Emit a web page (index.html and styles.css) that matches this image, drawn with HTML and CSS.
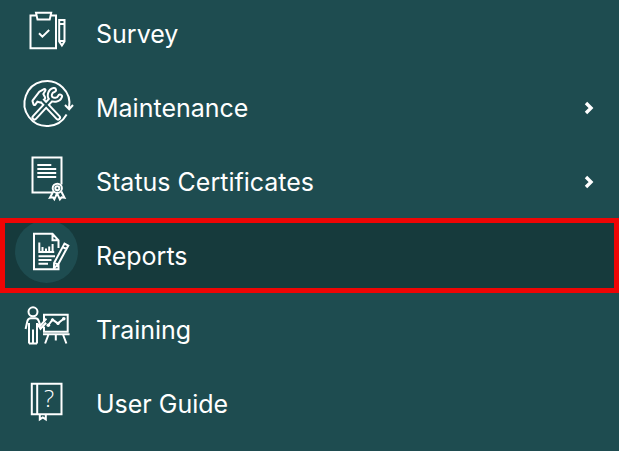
FILE: index.html
```html
<!DOCTYPE html>
<html lang="en">
<head>
<meta charset="utf-8">
<meta name="viewport" content="width=device-width, initial-scale=1">
<title>Menu</title>
<link rel="stylesheet" href="styles.css">
</head>
<body>
<nav aria-label="Main">
<ul class="menu">
  <li><a class="item" href="#survey">
    <svg class="icon" viewBox="0 0 64 64" aria-hidden="true">
      <path d="M21 17.5h-5.5v32.8h25.5V17.5H36M21 14.8h15.2l-1.5 6.8H22.5zM24 35.2l3.4 3.4 6.8-6.6M44.2 22h5.3v21.5l-2.6 4-2.7-4zM44.2 26h5.3M44.2 43h5.3"/>
    </svg>
    <span class="label">Survey</span>
  </a></li>
  <li><a class="item" href="#maintenance">
    <svg class="icon" viewBox="0 0 64 64" aria-hidden="true">
      <defs>
        <path id="handles" d="M27 28.5L43 45.5M36.5 27L19.5 45.5"/>
        <path id="jaw" d="M39 18C34.5 19 33.8 24.500 36 26.500C38 28.500 43.500 28.500 45 24.500"/>
        <path id="hammer" d="M18.500 29L25 20.500l4.500-2.500-2.300 4 2 4-3.700 3.500-3.500-1-2.500 3.500z"/>
      </defs>
      <path d="M54 36A22.5 22.5 0 1 0 51.600 42.500M50 33l4.200 4.200 3.800-4.200"/>
      <g class="tool-edge"><use href="#handles"/><use href="#jaw"/><use class="head" href="#hammer"/></g>
      <g class="tool-core"><use href="#handles"/><use href="#jaw"/><use class="head" href="#hammer"/></g>
    </svg>
    <span class="label">Maintenance</span>
    <svg class="chevron" viewBox="0 0 10 14" aria-hidden="true"><path d="M2 2l5 5-5 5"/></svg>
  </a></li>
  <li><a class="item" href="#certificates">
    <svg class="icon" viewBox="0 0 64 64" aria-hidden="true">
      <path d="M37 46.4H17.500V11.600h29v27M22.300 19h14M22.300 23h18.900M22.300 27h18.900M22.300 31h18.900"/>
      <circle cx="42.3" cy="42.3" r="4.6"/><circle cx="42.3" cy="42.3" r="2"/>
      <path d="M38.3 45.5l-3.400 6.200 3-.4 1.400 2 2.800-6 2.800 6 1.600-2 3 .4-3.200-6.200"/>
    </svg>
    <span class="label">Status Certificates</span>
    <svg class="chevron" viewBox="0 0 10 14" aria-hidden="true"><path d="M2 2l5 5-5 5"/></svg>
  </a></li>
  <li><a class="item current" href="#reports" aria-current="page">
    <svg class="icon" viewBox="0 0 64 64" aria-hidden="true">
      <circle class="disc" cx="31.5" cy="31.5" r="31.5"/>
      <path d="M43.5 28v-7.7l-6-6.5H19v35.400h24.500v-5M37.500 14v6.300h6M24.300 22.500V32h14.900M27.500 32v-5M31 32v-3.500M34.200 32v-5.500M37.600 32v-8M23.500 36.300H40M23.500 40h13M23.500 43.800H33M49.500 23.600l3.800 2-10.400 19.200-4 3.200.2-5zM47.600 27l3.800 2M39.200 42.600l3.800 2"/>
    </svg>
    <span class="label">Reports</span>
  </a></li>
  <li><a class="item" href="#training">
    <svg class="icon" viewBox="0 0 64 64" aria-hidden="true">
      <circle cx="18" cy="17.8" r="4.5"/>
      <path d="M14 49.400V29M18 49.400V35.500M22 49.400V29M14 49.400h8M10.600 35l1.800-8q.7-2.800 3.400-2.800h4.600q2.400 0 3.300 2.600l1.700 4.800 6-7M22.500 30l3 4.800 5.600-6M29 27v-6.200h23.700v17H29v-5M28 40.300h26.600M33.500 40.500l-3.400 9M40.800 40.500v6M48 40.500l3.400 9M33.500 31l4-5.400 5.400 3.800 5.800-4.600"/>
      <g class="dots"><circle cx="33.3" cy="31.3" r="1.8"/><circle cx="37.5" cy="25.8" r="1.6"/><circle cx="43" cy="29.5" r="1.6"/><circle cx="48.8" cy="24.8" r="1.8"/></g>
    </svg>
    <span class="label">Training</span>
  </a></li>
  <li><a class="item" href="#guide">
    <svg class="icon" viewBox="0 0 64 64" aria-hidden="true">
      <path d="M16.800 15.800h29.700v30.400H16.800zM22.200 16v30M24.800 46.200v5.200l3-2 3 2v-5.200"/>
      <text class="mark" x="34" y="39" text-anchor="middle">?</text>
    </svg>
    <span class="label">User Guide</span>
  </a></li>
</ul>
</nav>
</body>
</html>
```
FILE: styles.css
```css
* { box-sizing: border-box; }
body {
  margin: 0;
  background: #1e4c50;
  color: #fff;
  font-family: Inter, "Liberation Sans", sans-serif;
  font-size: 25px;
  line-height: 32px;
  overflow: hidden;
}
.menu {
  list-style: none;
  margin: -3px 0 0;
  padding: 0 0 7px;
}
.item {
  position: relative;
  display: flex;
  align-items: center;
  gap: 17px;
  min-height: 74px;
  padding: 0 25px 0 15px;
  color: inherit;
  text-decoration: none;
}
.current {
  background: #163a3c;
}
.current::after {
  content: "";
  position: absolute;
  inset: -1px 0 0;
  border: 5px solid #ee0505;
}
.icon {
  flex: none;
  width: 64px;
  height: 64px;
  margin-bottom: 8px;
  fill: none;
  stroke: #fff;
  stroke-width: 2;
}
.label { flex: 1; }
.disc {
  fill: #1e4c50;
  stroke: none;
}
.dots { fill: #fff; stroke: none; }
.tool-edge,
.tool-core {
  stroke-linecap: round;
  stroke-linejoin: round;
}
.tool-edge { stroke-width: 6; }
.tool-edge .head { stroke-width: 4; }
.tool-core { stroke: #1e4c50; stroke-width: 2; }
.tool-core .head {
  fill: #1e4c50;
  stroke-width: 0;
}
.mark {
  fill: #fff;
  stroke: none;
  font-family: "Open Sans", "Noto Sans", sans-serif;
  font-weight: 300;
  font-size: 24px;
}
.chevron {
  flex: none;
  width: 10px;
  height: 14px;
  fill: none;
  stroke: #fff;
  stroke-width: 3.4;
}
```
